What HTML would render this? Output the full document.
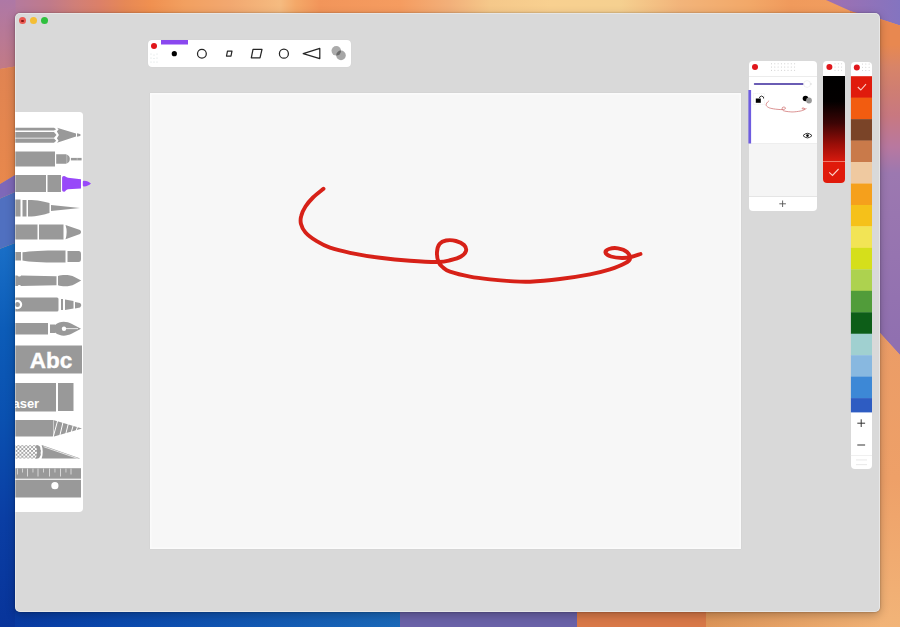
<!DOCTYPE html>
<html><head><meta charset="utf-8">
<style>
html,body{margin:0;padding:0;width:900px;height:627px;overflow:hidden;font-family:"Liberation Sans",sans-serif;background:#f0a868;}
.abs{position:absolute;}
.strip{position:absolute;}
#win{position:absolute;left:15px;top:13px;width:865px;height:599px;background:#d9d9d9;border-radius:5px;box-shadow:0 0 2px rgba(0,0,0,0.35),0 3px 10px rgba(0,0,0,0.25);overflow:hidden;}
.tl{position:absolute;top:4.3px;width:7px;height:7px;border-radius:50%;}
#canvas{position:absolute;left:134.7px;top:79.7px;width:591.3px;height:456.5px;background:#f7f7f7;box-shadow:0 0 1px rgba(0,0,0,0.1),inset 0 0 0 1.5px rgba(255,255,255,0.55);}
#toolbar{position:absolute;left:133px;top:27px;width:203px;height:27px;background:#fff;border-radius:4px;box-shadow:0 0 1px rgba(0,0,0,0.1);}
#pens{position:absolute;left:0;top:99.4px;width:68px;height:399.6px;background:#fff;border-radius:0 3.5px 4px 0;}
#layers{position:absolute;left:734px;top:48px;width:68px;height:149.5px;background:#fff;border-radius:4px;overflow:hidden;}
#grad{position:absolute;left:808px;top:48.4px;width:22px;height:121.6px;background:#fff;border-radius:4px;overflow:hidden;}
#pal{position:absolute;left:835.7px;top:48.9px;width:21.3px;height:407.6px;background:#fff;border-radius:4px;overflow:hidden;}
</style></head><body>
<svg class="abs" style="left:0;top:0" width="900" height="627" viewBox="0 0 900 627">
<defs>
<linearGradient id="gt" x1="0" y1="0" x2="900" y2="0" gradientUnits="userSpaceOnUse">
<stop offset="0.0000" stop-color="#b07aa6"/><stop offset="0.0278" stop-color="#b87a98"/><stop offset="0.0556" stop-color="#c07a8a"/><stop offset="0.0833" stop-color="#d07f78"/><stop offset="0.1111" stop-color="#dc8068"/>
<stop offset="0.1389" stop-color="#e68856"/><stop offset="0.1667" stop-color="#f09050"/><stop offset="0.2056" stop-color="#f2a060"/><stop offset="0.2556" stop-color="#f2a870"/><stop offset="0.3111" stop-color="#f5bb80"/>
<stop offset="0.3289" stop-color="#f4a868"/><stop offset="0.3556" stop-color="#f2955a"/><stop offset="0.4444" stop-color="#f59c60"/><stop offset="0.5000" stop-color="#f2b07a"/><stop offset="0.5444" stop-color="#f5c88a"/>
<stop offset="0.6111" stop-color="#f8d090"/><stop offset="0.6889" stop-color="#f5d090"/><stop offset="0.7556" stop-color="#f2b47a"/><stop offset="0.8333" stop-color="#f2a868"/><stop offset="0.8778" stop-color="#f09a5c"/><stop offset="1.0000" stop-color="#f2a060"/>
</linearGradient>
<linearGradient id="gtp" x1="826" y1="0" x2="900" y2="0" gradientUnits="userSpaceOnUse"><stop offset="0" stop-color="#a070b0"/><stop offset="1" stop-color="#8474c0"/></linearGradient>
<linearGradient id="gr" x1="0" y1="19" x2="0" y2="340" gradientUnits="userSpaceOnUse">
<stop offset="0" stop-color="#e88850"/><stop offset="0.08" stop-color="#e88850"/><stop offset="0.15" stop-color="#d88468"/><stop offset="0.22" stop-color="#cf7e72"/><stop offset="0.3" stop-color="#c87880"/><stop offset="0.4" stop-color="#b878a0"/><stop offset="0.48" stop-color="#9c78b0"/><stop offset="1" stop-color="#9070b0"/>
</linearGradient>
<linearGradient id="grp" x1="0" y1="330" x2="0" y2="627" gradientUnits="userSpaceOnUse"><stop offset="0" stop-color="#eb9c66"/><stop offset="0.5" stop-color="#eea068"/><stop offset="1" stop-color="#f2b478"/></linearGradient>
<linearGradient id="glm" x1="0" y1="0" x2="0" y2="69" gradientUnits="userSpaceOnUse"><stop offset="0" stop-color="#ae78a6"/><stop offset="1" stop-color="#c27a86"/></linearGradient>
<linearGradient id="glo" x1="0" y1="65" x2="0" y2="184" gradientUnits="userSpaceOnUse"><stop offset="0" stop-color="#e08452"/><stop offset="1" stop-color="#e8884c"/></linearGradient>
<linearGradient id="glb" x1="0" y1="240" x2="0" y2="627" gradientUnits="userSpaceOnUse"><stop offset="0" stop-color="#1a70c8"/><stop offset="0.23" stop-color="#0c5cb8"/><stop offset="0.47" stop-color="#0a50b0"/><stop offset="0.72" stop-color="#0a3ea4"/><stop offset="1" stop-color="#08349a"/></linearGradient>
<linearGradient id="gb1" x1="0" y1="0" x2="400" y2="0" gradientUnits="userSpaceOnUse"><stop offset="0" stop-color="#0838a0"/><stop offset="0.3" stop-color="#0a48ac"/><stop offset="1" stop-color="#1a68b8"/></linearGradient>
<linearGradient id="gb4" x1="706" y1="0" x2="900" y2="0" gradientUnits="userSpaceOnUse"><stop offset="0" stop-color="#dc9458"/><stop offset="1" stop-color="#f2b478"/></linearGradient>
</defs>
<rect x="0" y="0" width="900" height="40" fill="url(#gt)"/>
<polygon points="826,0 900,0 900,25.5 880,19 855,13" fill="url(#gtp)"/>
<polygon points="0,0 15.5,0 15.5,66.5 0,69" fill="url(#glm)"/>
<polygon points="0,69 15,66.5 40,63 40,160 15,175 0,184" fill="url(#glo)"/>
<polygon points="0,184 15,175 40,160 40,185 15,192 0,198.5" fill="#7e68b8"/>
<polygon points="0,198.5 15,192 40,180 40,236 15,243 0,248.7" fill="#5070c0"/>
<polygon points="0,248.7 15,243 40,236 40,627 0,627" fill="url(#glb)"/>
<polygon points="850,11 880,19 900,25.5 900,355 880,333 850,316" fill="url(#gr)"/>
<polygon points="860,320 880,333 900,355 900,627 860,627" fill="url(#grp)"/>
<rect x="15" y="590" width="385" height="37" fill="url(#gb1)"/>
<rect x="400" y="590" width="177" height="37" fill="#6a62a8"/>
<rect x="577" y="590" width="129" height="37" fill="#d87848"/>
<rect x="706" y="590" width="174" height="37" fill="url(#gb4)"/>
</svg>
<div id="win">
  <div class="tl" style="left:4px;background:#ea5a52;"><div style="position:absolute;left:2.4px;top:2.4px;width:2.2px;height:2.2px;border-radius:50%;background:#8a1515"></div></div>
  <div class="tl" style="left:14.8px;background:#f4be35;"></div>
  <div class="tl" style="left:25.7px;background:#2fc03e;"></div>
  <div id="canvas"></div>
  <div id="toolbar"></div>
  <div id="pens"></div>
  <div id="layers"></div>
  <div id="grad"></div>
  <div id="pal"></div>
</div>
<svg class="abs" style="left:0;top:0" width="900" height="627" viewBox="0 0 900 627">
<defs>
<clipPath id="winclip"><rect x="15" y="13" width="865" height="599" rx="5"/></clipPath>
<pattern id="dots" x="0" y="0" width="3.9" height="3.8" patternUnits="userSpaceOnUse" patternTransform="translate(15.5 446.2)">
<rect width="3.9" height="3.8" fill="#fff"/><circle cx="0.95" cy="0.95" r="1.05" fill="#999"/><circle cx="2.9" cy="2.85" r="1.05" fill="#999"/></pattern>
</defs>
<!-- toolbar icons -->
<circle cx="154" cy="46" r="3" fill="#e0161b"/>
<rect x="161" y="40" width="27" height="4.5" fill="#8a48ef"/>
<g fill="#ccd6d6">
<circle cx="151" cy="54" r="0.5"/><circle cx="157" cy="54" r="0.5"/><circle cx="154" cy="55" r="0.5"/>
<circle cx="151" cy="58" r="0.5"/><circle cx="157" cy="58" r="0.5"/><circle cx="154" cy="58.5" r="0.5"/>
<circle cx="151" cy="62" r="0.5"/><circle cx="157" cy="62" r="0.5"/><circle cx="154" cy="62" r="0.5"/>
</g>
<circle cx="174.3" cy="53.7" r="2.6" fill="#000"/>
<g fill="none" stroke="#262626" stroke-width="1.25" stroke-linejoin="round">
<circle cx="201.9" cy="53.7" r="4.4"/>
<path d="M227.5 51 H232 L231 56 H226.5 Z"/>
<path d="M253 49.4 H262 L260 57.8 H251.3 Z"/>
<circle cx="283.9" cy="53.7" r="4.5"/>
<path d="M303.2 53.7 L319.8 48.4 V58.6 Z"/>
</g>
<clipPath id="c1clip"><circle cx="336.3" cy="50.8" r="4.8"/></clipPath>
<circle cx="336.3" cy="50.8" r="4.8" fill="#ababab"/>
<circle cx="341" cy="55.4" r="4.8" fill="#a6a6a6"/>
<circle cx="341" cy="55.4" r="4.8" fill="#6a6a6a" clip-path="url(#c1clip)"/>
<!-- stroke -->
<path fill="none" stroke="#d72118" stroke-width="3.9" stroke-linecap="round" stroke-linejoin="round" d="M323.5 188.7 C321.8 190.2 316.0 194.5 313.0 197.5 C310.0 200.5 307.5 203.4 305.5 206.5 C303.5 209.6 301.9 213.1 301.2 216.0 C300.4 218.9 300.3 221.2 301.0 224.0 C301.7 226.8 302.9 229.6 305.5 232.5 C308.1 235.4 312.6 238.7 316.7 241.2 C320.8 243.7 324.4 245.8 330.0 247.7 C335.6 249.6 341.7 251.1 350.0 252.8 C358.3 254.5 370.0 256.5 380.0 257.8 C390.0 259.1 400.2 260.1 410.0 260.8 C419.8 261.5 431.7 262.1 438.5 262.0 C445.3 261.9 447.2 260.9 451.0 260.0 C454.8 259.1 458.5 258.0 461.0 256.5 C463.5 255.0 465.5 252.9 466.0 251.0 C466.5 249.1 465.7 246.7 464.0 245.0 C462.3 243.3 459.0 241.8 456.0 241.0 C453.0 240.2 448.8 240.0 446.0 240.5 C443.2 241.0 441.0 242.1 439.5 244.0 C438.0 245.9 437.2 249.0 437.0 252.0 C436.8 255.0 437.5 259.4 438.5 262.0 C439.5 264.6 441.1 265.9 443.0 267.5 C444.9 269.1 445.5 270.2 450.0 271.7 C454.5 273.2 463.3 275.4 470.0 276.7 C476.7 278.0 483.3 278.7 490.0 279.4 C496.7 280.1 503.3 280.7 510.0 281.1 C516.7 281.5 521.7 282.1 530.0 281.7 C538.3 281.3 550.0 280.2 560.0 279.0 C570.0 277.8 581.7 276.0 590.0 274.4 C598.3 272.8 604.2 271.2 610.0 269.4 C615.8 267.5 621.7 265.1 625.0 263.3 C628.3 261.6 629.7 260.8 630.0 258.9 C630.3 257.0 629.0 253.8 627.0 252.0 C625.0 250.2 621.0 248.8 618.0 248.3 C615.0 247.8 611.1 248.3 609.0 249.0 C606.9 249.7 605.2 251.2 605.5 252.5 C605.8 253.8 608.2 255.6 611.0 256.5 C613.8 257.4 618.7 257.9 622.0 258.0 C625.3 258.1 627.9 257.7 631.0 257.0 C634.1 256.3 638.9 254.5 640.5 254.0"/>
<!-- pens -->
<g clip-path="url(#winclip)" fill="#999999">
<path d="M10 127.8 H54 L56.2 129.2 L54 130.6 H10Z"/>
<path d="M10 132 H54 L56.5 134.9 L54 137.8 H10Z"/>
<path d="M10 138.6 H54 L56.2 140.7 L54 142.8 H10Z"/>
<path d="M57 127.8 L76 133.4 V136.6 L57 142.8 L58.6 140.7 L56.9 138.3 L58.9 134.9 L56.9 131.5 L58.6 129.2Z"/>
<path d="M77 133.2 L80 134 Q81.5 135 80 136 L77 136.8Z"/>
<rect x="10" y="151.5" width="45" height="15"/>
<path d="M56.2 154.2 H66 Q69.8 155.2 69.8 159 Q69.8 162.8 66 163.8 H56.2Z"/>
<rect x="66.3" y="154.2" width="1" height="9.6" fill="#fff" fill-opacity="0.35"/>
<rect x="70.9" y="157.9" width="10.7" height="2.5"/>
<rect x="76.8" y="157.9" width="0.6" height="2.5" fill="#fff" fill-opacity="0.5"/>
<rect x="10" y="175" width="36" height="17"/>
<rect x="47.5" y="175" width="13.5" height="17"/>
<path fill="#9848f9" d="M62.1 177.5 Q62.1 175.8 64 175.9 C65.5 176.1 66 177.2 68 177.7 L81 179.2 V188.6 L68 189.2 C66 189.6 65.5 191.6 64 191.8 Q62.1 191.9 62.1 190Z"/>
<path fill="#9848f9" d="M82.8 181.5 Q82.8 180.7 84 180.7 C87 180.8 89 181.8 91 183.5 C89 185.3 87 186.3 84 186.4 Q82.8 186.4 82.8 185.5Z"/>
<rect x="10" y="199.5" width="10.5" height="17"/>
<rect x="22.5" y="200" width="4" height="16.5"/>
<path d="M28 200 C38 200 44 201.5 49.5 203 V213 C44 214.5 38 216.5 28 216.5Z"/>
<path d="M51 205 L80 208 L51 211Z"/>
<rect x="10" y="224.5" width="27.5" height="15"/>
<rect x="39" y="224.5" width="24.5" height="15"/>
<path d="M65.5 225 L80 230 Q82.2 232 80 234 L65.5 239.2 Q67.8 232 65.5 225Z"/>
<rect x="10" y="252" width="11" height="8.5"/>
<path d="M22.5 252.3 C30 250.8 50 250.3 65.5 250.5 V262.5 C50 262.8 30 262.3 22.5 260.5Z"/>
<path d="M67.5 251 H78.5 Q81 251 81 254 V259 Q81 262 78.5 262 H67.5Z"/>
<path d="M10 275.5 H21 L56.5 276.3 V285.2 L21 286 H10Z"/>
<ellipse cx="19.3" cy="275.3" rx="1.6" ry="1.3" fill="#fff"/><ellipse cx="19.3" cy="286.2" rx="1.6" ry="1.3" fill="#fff"/>
<path d="M58 276 C62 274.6 70 274.4 74.5 277 L81.2 280.6 L74.5 284.2 C70 286.8 62 286.6 58 285.2Z"/>
<path d="M10 297.5 H57 Q58.5 297.5 58.5 299 V310 Q58.5 311.5 57 311.5 H10Z"/>
<circle cx="17.5" cy="304.5" r="3.6" fill="none" stroke="#fff" stroke-width="2.2"/>
<rect x="61" y="299" width="2" height="11"/>
<path d="M65 299.5 L73.5 301 V308.5 L65 310Z"/>
<path d="M75 302 L80 303 Q82.5 305.2 80 307.4 L75 308.5Z"/>
<rect x="10" y="323" width="38" height="11.5"/>
<rect x="50" y="324.5" width="5" height="8.5"/>
<path d="M55 325 C60 321 66 321 72 324 L81 328.7 L72 333.5 C66 336.5 60 336.5 55 332.5Z"/>
<circle cx="64" cy="328.7" r="2.2" fill="#fff"/>
<rect x="64" y="328.3" width="14" height="0.8" fill="#fff"/>
<rect x="10" y="345.5" width="72" height="28"/>
<text x="29.8" y="368" font-family="Liberation Sans" font-weight="bold" font-size="22.5" fill="#fff" stroke="#fff" stroke-width="0.35">Abc</text>
<rect x="10" y="383" width="46" height="28.5"/>
<rect x="58" y="383" width="15.5" height="28"/>
<text x="-1.3" y="408" font-family="Liberation Sans" font-weight="bold" font-size="13" fill="#fff">Eraser</text>
<rect x="10" y="420" width="43.5" height="16.5"/>
<path d="M54 420.3 L82 428.5 L54 436.5Z"/>
<g stroke="#fff" stroke-width="1">
<path d="M53.2 437 L57.8 420"/><path d="M59.5 437 L63.3 421"/><path d="M65.5 435 L68.5 423"/><path d="M71 433 L73.5 424.5"/><path d="M76 431 L77.8 426"/>
</g>
<path fill="url(#dots)" d="M10 445.3 H37 C40.5 445.3 41 449 41 452 C41 455 40.5 458.6 37 458.6 H10Z"/>
<path d="M35.5 445.3 H37 C40.2 445.3 40.6 449 40.6 452 C40.6 455 40.2 458.6 37 458.6 H35.5 C37.5 455 37.5 449 35.5 445.3Z"/>
<path d="M41.6 445.1 L80.4 458.6 H41.6 C43.1 455 43.1 449 41.6 445.1Z"/>
<path d="M43.6 446.7 L77.5 458.4" stroke="#fff" stroke-width="0.75" fill="none"/>
<rect x="10" y="468.2" width="71" height="10.5"/>
<g fill="#d8d8d8">
<rect x="17" y="468.5" width="0.9" height="6"/><rect x="22" y="468.5" width="0.9" height="4"/><rect x="27" y="468.5" width="1" height="8"/><rect x="32.5" y="468.5" width="0.9" height="4"/>
<rect x="37.5" y="468.5" width="1" height="8"/><rect x="43" y="468.5" width="0.9" height="4"/><rect x="49" y="468.5" width="1" height="8"/><rect x="54.5" y="468.5" width="0.9" height="4"/>
<rect x="60" y="468.5" width="1" height="8"/><rect x="65.5" y="468.5" width="0.9" height="4"/><rect x="70.5" y="468.5" width="1" height="6"/>
</g>
<rect x="10" y="479.8" width="71" height="17.7"/>
<circle cx="54.9" cy="485.7" r="3.6" fill="#fff"/>
</g>

<!-- layers panel -->
<rect x="749" y="76" width="68" height="0.8" fill="#e8e8e8"/>
<circle cx="755" cy="67" r="3" fill="#e0161b"/>
<g fill="#c8c8c8">
<circle cx="771.5" cy="63.8" r="0.55"/><circle cx="771.5" cy="67" r="0.55"/><circle cx="771.5" cy="70.2" r="0.55"/><circle cx="774.8" cy="63.8" r="0.55"/><circle cx="774.8" cy="67" r="0.55"/><circle cx="774.8" cy="70.2" r="0.55"/><circle cx="778.1" cy="63.8" r="0.55"/><circle cx="778.1" cy="67" r="0.55"/><circle cx="778.1" cy="70.2" r="0.55"/><circle cx="781.4" cy="63.8" r="0.55"/><circle cx="781.4" cy="67" r="0.55"/><circle cx="781.4" cy="70.2" r="0.55"/><circle cx="784.7" cy="63.8" r="0.55"/><circle cx="784.7" cy="67" r="0.55"/><circle cx="784.7" cy="70.2" r="0.55"/><circle cx="788.0" cy="63.8" r="0.55"/><circle cx="788.0" cy="67" r="0.55"/><circle cx="788.0" cy="70.2" r="0.55"/><circle cx="791.3" cy="63.8" r="0.55"/><circle cx="791.3" cy="67" r="0.55"/><circle cx="791.3" cy="70.2" r="0.55"/><circle cx="794.6" cy="63.8" r="0.55"/><circle cx="794.6" cy="67" r="0.55"/><circle cx="794.6" cy="70.2" r="0.55"/>
</g>
<rect x="753.8" y="83.1" width="50" height="1.9" rx="0.9" fill="#6a5cb4"/>
<rect x="806" y="83.4" width="5.4" height="1.2" fill="#bbb"/>
<circle cx="807.1" cy="84" r="3.4" fill="#fff" stroke="#e8e8e8" stroke-width="0.6"/>
<rect x="749" y="143.5" width="68" height="53" fill="#f5f5f5"/>
<rect x="749" y="143.2" width="68" height="0.6" fill="#e6e6e6"/>
<rect x="749" y="196.3" width="68" height="0.7" fill="#dcdcdc"/>
<rect x="748.4" y="90" width="2.7" height="53.5" fill="#6e5ce0"/>
<rect x="753.5" y="93.5" width="11" height="11" fill="none" stroke="#e6e6e6" stroke-width="0.8" stroke-dasharray="0.8 1.2"/>
<rect x="755.8" y="98.5" width="5" height="4.3" fill="#000"/>
<path d="M759.6 98 V97 Q761.5 95 763.5 97 V98.5" fill="none" stroke="#222" stroke-width="0.9"/>
<g transform="translate(748.4 89.75) scale(0.1176) translate(-150 -93)">
<path fill="none" stroke="#c85a5a" stroke-opacity="0.75" stroke-width="7.5" stroke-linecap="round" d="M323.5 188.7 C321.8 190.2 316.0 194.5 313.0 197.5 C310.0 200.5 307.5 203.4 305.5 206.5 C303.5 209.6 301.9 213.1 301.2 216.0 C300.4 218.9 300.3 221.2 301.0 224.0 C301.7 226.8 302.9 229.6 305.5 232.5 C308.1 235.4 312.6 238.7 316.7 241.2 C320.8 243.7 324.4 245.8 330.0 247.7 C335.6 249.6 341.7 251.1 350.0 252.8 C358.3 254.5 370.0 256.5 380.0 257.8 C390.0 259.1 400.2 260.1 410.0 260.8 C419.8 261.5 431.7 262.1 438.5 262.0 C445.3 261.9 447.2 260.9 451.0 260.0 C454.8 259.1 458.5 258.0 461.0 256.5 C463.5 255.0 465.5 252.9 466.0 251.0 C466.5 249.1 465.7 246.7 464.0 245.0 C462.3 243.3 459.0 241.8 456.0 241.0 C453.0 240.2 448.8 240.0 446.0 240.5 C443.2 241.0 441.0 242.1 439.5 244.0 C438.0 245.9 437.2 249.0 437.0 252.0 C436.8 255.0 437.5 259.4 438.5 262.0 C439.5 264.6 441.1 265.9 443.0 267.5 C444.9 269.1 445.5 270.2 450.0 271.7 C454.5 273.2 463.3 275.4 470.0 276.7 C476.7 278.0 483.3 278.7 490.0 279.4 C496.7 280.1 503.3 280.7 510.0 281.1 C516.7 281.5 521.7 282.1 530.0 281.7 C538.3 281.3 550.0 280.2 560.0 279.0 C570.0 277.8 581.7 276.0 590.0 274.4 C598.3 272.8 604.2 271.2 610.0 269.4 C615.8 267.5 621.7 265.1 625.0 263.3 C628.3 261.6 629.7 260.8 630.0 258.9 C630.3 257.0 629.0 253.8 627.0 252.0 C625.0 250.2 621.0 248.8 618.0 248.3 C615.0 247.8 611.1 248.3 609.0 249.0 C606.9 249.7 605.2 251.2 605.5 252.5 C605.8 253.8 608.2 255.6 611.0 256.5 C613.8 257.4 618.7 257.9 622.0 258.0 C625.3 258.1 627.9 257.7 631.0 257.0 C634.1 256.3 638.9 254.5 640.5 254.0"/>
</g>
<circle cx="805.5" cy="98.5" r="2.8" fill="#000"/>
<circle cx="809" cy="100.5" r="2.9" fill="#999"/>
<path d="M803 135.6 Q807.5 131 812 135.6 Q807.5 140.2 803 135.6Z" fill="none" stroke="#222" stroke-width="0.9"/>
<circle cx="807.5" cy="135.6" r="1.3" fill="#000"/>
<path d="M782.6 200.5 V207 M779.3 203.8 H785.9" stroke="#555" stroke-width="0.9"/>
<!-- gradient panel -->
<defs><linearGradient id="gk" x1="0" y1="0" x2="0" y2="1">
<stop offset="0" stop-color="#000"/><stop offset="0.3" stop-color="#030000"/><stop offset="0.55" stop-color="#3c0505"/><stop offset="0.8" stop-color="#9a0e08"/><stop offset="1" stop-color="#d81a0e"/></linearGradient>
<clipPath id="gclip"><path d="M823 61.4 H845 V179 Q845 183 841 183 H827 Q823 183 823 179Z"/></clipPath>
<clipPath id="pclip"><rect x="850.7" y="61.9" width="21.3" height="407.6" rx="4"/></clipPath>
</defs>
<g clip-path="url(#gclip)">
<rect x="823" y="76" width="22" height="85.5" fill="url(#gk)"/>
<rect x="823" y="161" width="22" height="1" fill="#f07a6a"/>
<rect x="823" y="162" width="22" height="21.5" fill="#e01a0b"/>
</g>
<circle cx="829.4" cy="67" r="3" fill="#e0161b"/>
<g fill="#c8c8c8"><circle cx="835.0" cy="63.8" r="0.5"/><circle cx="835.0" cy="67" r="0.5"/><circle cx="835.0" cy="70.2" r="0.5"/><circle cx="838.3" cy="63.8" r="0.5"/><circle cx="838.3" cy="67" r="0.5"/><circle cx="838.3" cy="70.2" r="0.5"/><circle cx="841.6" cy="63.8" r="0.5"/><circle cx="841.6" cy="67" r="0.5"/><circle cx="841.6" cy="70.2" r="0.5"/></g>
<path d="M829.2 172.4 L832.5 175.5 L838.6 169" fill="none" stroke="#fbd0c8" stroke-width="1.1"/>
<!-- palette -->
<circle cx="856.8" cy="67.5" r="3" fill="#e0161b"/>
<g fill="#c8c8c8"><circle cx="862.5" cy="64" r="0.5"/><circle cx="862.5" cy="67.3" r="0.5"/><circle cx="862.5" cy="70.6" r="0.5"/><circle cx="865.8" cy="64" r="0.5"/><circle cx="865.8" cy="67.3" r="0.5"/><circle cx="865.8" cy="70.6" r="0.5"/><circle cx="869.1" cy="64" r="0.5"/><circle cx="869.1" cy="67.3" r="0.5"/><circle cx="869.1" cy="70.6" r="0.5"/></g>
<g clip-path="url(#pclip)">
<rect x="850.7" y="76.20" width="21.3" height="21.76" fill="#e01b0c"/>
<rect x="850.7" y="97.66" width="21.3" height="21.76" fill="#f25c10"/>
<rect x="850.7" y="119.12" width="21.3" height="21.76" fill="#7a4428"/>
<rect x="850.7" y="140.58" width="21.3" height="21.76" fill="#c97a4a"/>
<rect x="850.7" y="162.04" width="21.3" height="21.76" fill="#efc9a0"/>
<rect x="850.7" y="183.50" width="21.3" height="21.76" fill="#f5a01c"/>
<rect x="850.7" y="204.96" width="21.3" height="21.76" fill="#f5c11a"/>
<rect x="850.7" y="226.42" width="21.3" height="21.76" fill="#f2e455"/>
<rect x="850.7" y="247.88" width="21.3" height="21.76" fill="#d5df1b"/>
<rect x="850.7" y="269.34" width="21.3" height="21.76" fill="#add24f"/>
<rect x="850.7" y="290.80" width="21.3" height="21.76" fill="#519c3a"/>
<rect x="850.7" y="312.26" width="21.3" height="21.76" fill="#0d5e18"/>
<rect x="850.7" y="333.72" width="21.3" height="21.76" fill="#a0d0d0"/>
<rect x="850.7" y="355.18" width="21.3" height="21.76" fill="#88b8e0"/>
<rect x="850.7" y="376.64" width="21.3" height="21.76" fill="#3d88d6"/>
<rect x="850.7" y="398.10" width="21.3" height="14.30" fill="#2e5cc2"/>

</g>
<path d="M857.8 87 L860.8 90 L866 84.2" fill="none" stroke="#fbd0c8" stroke-width="1.1"/>
<path d="M861.2 419.3 V427 M857.3 423.2 H865.1" stroke="#2a2a2a" stroke-width="0.95"/>
<path d="M857.3 445 H865.1" stroke="#2a2a2a" stroke-width="0.95"/>
<rect x="850.7" y="455" width="21.3" height="0.6" fill="#e6e6e6"/>
<rect x="856" y="459.6" width="11" height="0.7" fill="#dedede"/>
<rect x="856" y="464.4" width="11" height="0.7" fill="#dedede"/>
</svg>
<div style="position:absolute;left:15px;top:13px;width:865px;height:599px;border-radius:5px;box-shadow:inset 0 0 0 0.8px rgba(255,255,255,0.45);pointer-events:none;"></div>
</body></html>
